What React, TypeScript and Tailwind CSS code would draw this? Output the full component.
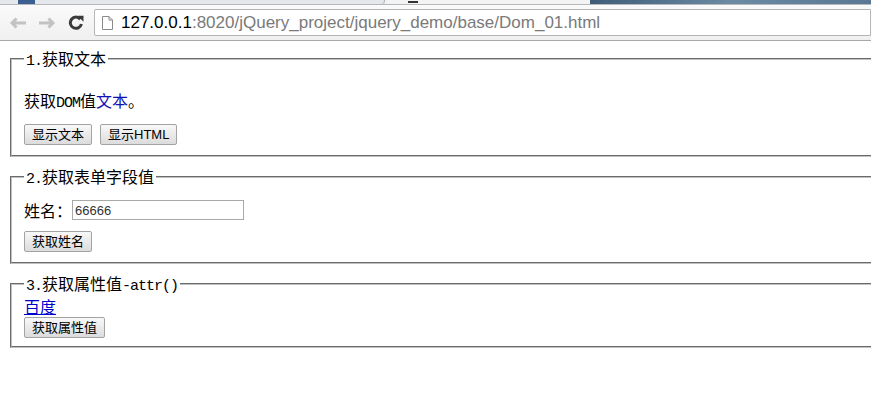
const Btn = ({ children }: { children: React.ReactNode }) => (
  <button className="h-[21px] px-[7px] text-[13px] leading-none text-black border border-[#a3a3a3] rounded-[2px] bg-gradient-to-b from-[#f8f8f8] to-[#dcdcdc] font-['Liberation_Sans','Noto_Sans_CJK_SC',sans-serif]">
    {children}
  </button>
);

// half-width latin, like SimSun's ascii glyphs
const M = ({ children }: { children: React.ReactNode }) => (
  <span className="font-['Liberation_Mono',monospace] text-[15px] tracking-[-1px]">{children}</span>
);

const fieldset =
  "ml-[2px] w-[1200px] border-2 [border-style:groove] border-[#c0c0c0] px-[12px]";
const legend = "px-[2px] h-[19px] leading-[19px] text-[16px] text-black";

const Toolbar = () => (
  <div className="h-[41px] flex flex-col">
    {/* tab strip */}
    <div className="h-[5px] flex bg-[#dde2e8] border-b border-[#b4b8bd]">
      <div className="w-[385px] flex bg-[#e4e7eb] rounded-br-[4px] border-r border-[#a9b0b8]">
        <div className="ml-[18px] w-[17px] bg-[#3b5f8f]" />
      </div>
      <div className="w-[205px] flex bg-[#f3f3f3]">
        <div className="ml-[23px] mt-[1px] w-[10px] h-[2px] bg-[#333]" />
      </div>
      <div className="flex-1 bg-gradient-to-r from-[#3f5d78] via-[#6c8aa2] to-[#5a7893]" />
    </div>
    {/* nav + address */}
    <div className="flex-1 flex items-center bg-gradient-to-b from-[#fafafa] to-[#f0f0f0] border-b border-[#a8a8a8]">
      <svg width="18" height="12" viewBox="0 0 18 12" className="ml-[9px]">
        <path d="M17 6H3M7.5 1.5L3 6l4.5 4.5" stroke="#c2c2c2" strokeWidth="3" fill="none" />
      </svg>
      <svg width="18" height="12" viewBox="0 0 18 12" className="ml-[11px]">
        <path d="M1 6h14M10.5 1.5L15 6l-4.5 4.5" stroke="#c2c2c2" strokeWidth="3" fill="none" />
      </svg>
      <svg width="16" height="15" viewBox="0 0 16 15" className="ml-[12px]">
        <path d="M12.3 4.2A5.6 5.6 0 1 0 13.4 9" stroke="#3a3a3a" strokeWidth="3" fill="none" />
        <path d="M9.5 0.8L15.5 0.8 15.5 6.8Z" fill="#3a3a3a" />
      </svg>
      <div className="ml-[10px] flex-1 h-[27px] flex items-center bg-white border border-[#b5b5b5] rounded-l-[2px]">
        <svg width="11" height="14" viewBox="0 0 11 14" className="ml-[7px]">
          <path d="M0.5 0.5h6.5l3.5 3.5v9.5h-10z M7 0.5v3.5h3.5" stroke="#8a8a8a" fill="#fff" />
        </svg>
        <div className="ml-[8px] text-[17px] leading-none whitespace-nowrap font-['Liberation_Sans',sans-serif]">
          <span className="text-black">127.0.0.1</span>
          <span className="text-[#7a7a7a]">:8020/jQuery_project/jquery_demo/base/Dom_01.html</span>
        </div>
      </div>
    </div>
  </div>
);

export default function App() {
  return (
    <div className="w-[871px] h-[393px] overflow-hidden bg-white font-['Noto_Sans_CJK_SC',sans-serif]">
      <Toolbar />
      <div className="pt-[8px] pl-[8px]">
        {/* 1 */}
        <fieldset className={`${fieldset} pb-[10px]`}>
          <legend className={legend}>
            <M>1.</M>获取文本
          </legend>
          <div className="mt-[23px] h-[18px] leading-[18px] text-[16px] text-black">
            获取<M>DOM</M>值<span className="text-[#1212b4]">文本</span>。
          </div>
          <div className="mt-[15px] flex gap-[8px]">
            <Btn>显示文本</Btn>
            <Btn>显示HTML</Btn>
          </div>
        </fieldset>

        {/* 2 */}
        <fieldset className={`${fieldset} mt-[10px] pb-[10px]`}>
          <legend className={legend}>
            <M>2.</M>获取表单字段值
          </legend>
          <div className="mt-[14px] h-[20px] flex items-center text-[16px] text-black">
            <span>姓名：</span>
            <input
              defaultValue="66666"
              className="w-[172px] h-[20px] border border-[#a9a9a9] px-[2px] text-[13px] text-[#333] outline-none font-['Liberation_Sans',sans-serif]"
            />
          </div>
          <div className="mt-[11px] flex">
            <Btn>获取姓名</Btn>
          </div>
        </fieldset>

        {/* 3 */}
        <fieldset className={`${fieldset} mt-[10px] pb-[8px]`}>
          <legend className={legend}>
            <M>3.</M>获取属性值<M>-attr()</M>
          </legend>
          <div className="mt-[4px] h-[18px] leading-[18px] text-[16px]">
            <a href="#" className="text-[#0000cc] underline">
              百度
            </a>
          </div>
          <div className="mt-[2px] flex">
            <Btn>获取属性值</Btn>
          </div>
        </fieldset>
      </div>
    </div>
  );
}
